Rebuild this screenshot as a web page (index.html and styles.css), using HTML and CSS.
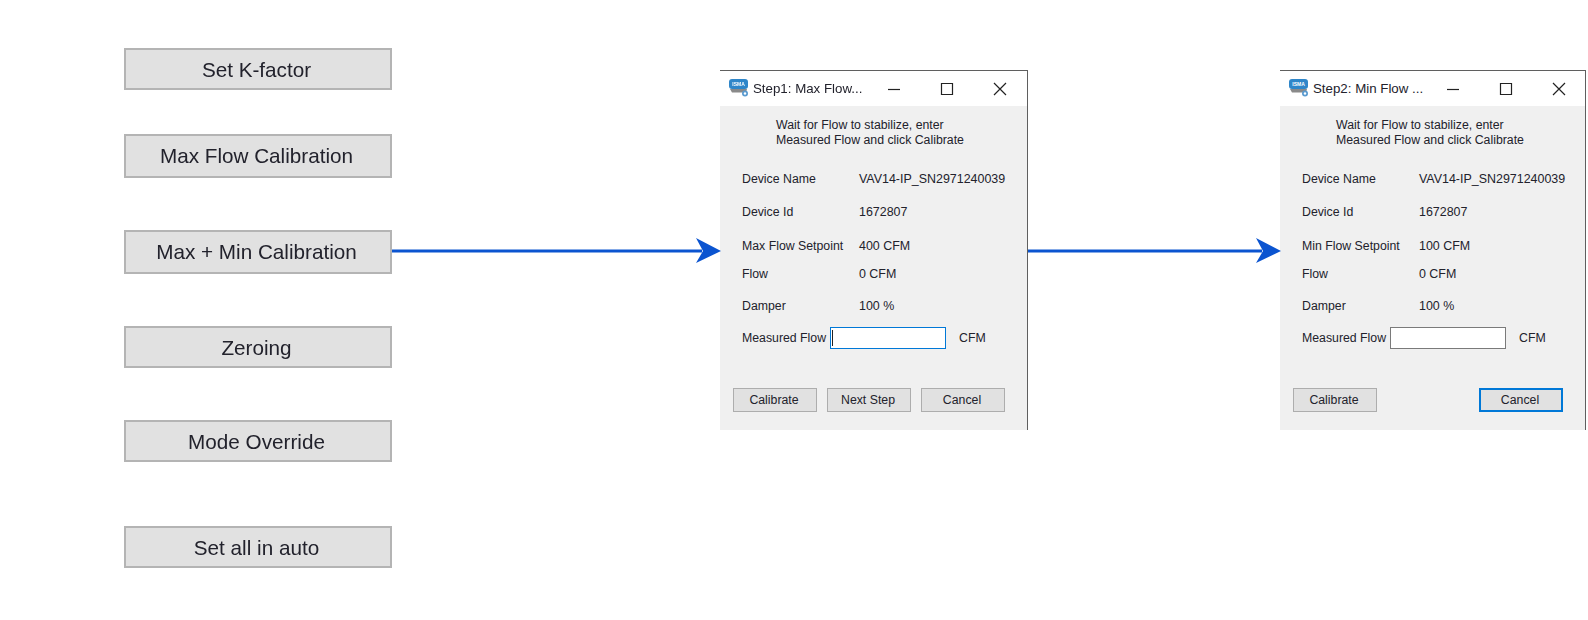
FILE: index.html
```html
<!DOCTYPE html>
<html lang="en">
<head>
<meta charset="utf-8">
<title>Calibration steps</title>
<link rel="stylesheet" href="styles.css">
</head>
<body>
<main class="canvas">
  <nav class="actions">
    <button class="action a1">Set K-factor</button>
    <button class="action a2">Max Flow Calibration</button>
    <button class="action a3">Max + Min Calibration</button>
    <button class="action a4">Zeroing</button>
    <button class="action a5">Mode Override</button>
    <button class="action a6">Set all in auto</button>
  </nav>

  <section class="dialog first">
    <header class="titlebar">
      <svg class="logo" width="22" height="20" viewBox="0 0 22 20"><rect x="1" y="1" width="19" height="10" rx="3" fill="#2f86c9"/><path d="M2 11h17l-1 3.500H4z" fill="#8a8a8a"/><text x="10.500" y="8.200" class="logo-text">ISMA</text><circle cx="17" cy="15.500" r="3" fill="#5b9bd0"/><circle cx="17" cy="15.500" r="1.200" fill="#fff"/></svg>
      <span class="title">Step1: Max Flow...</span>
      <span class="controls">
        <svg width="14" height="14" viewBox="0 0 14 14"><path d="M1 7.500h12" class="glyph"/></svg>
        <svg width="14" height="14" viewBox="0 0 14 14"><path d="M1.500 1.500h11v11h-11z" class="glyph"/></svg>
        <svg width="14" height="14" viewBox="0 0 14 14"><path d="M1 1l12 12M13 1L1 13" class="glyph"/></svg>
      </span>
    </header>
    <div class="content">
      <p class="hint">Wait for Flow to stabilize, enter<br>Measured Flow and click Calibrate</p>
      <div class="fields">
        <span>Device Name</span><span class="value">VAV14-IP_SN2971240039</span>
        <span>Device Id</span><span class="value">1672807</span>
        <span>Max Flow Setpoint</span><span class="value">400 CFM</span>
        <span>Flow</span><span class="value">0 CFM</span>
        <span>Damper</span><span class="value">100 %</span>
        <span>Measured Flow</span>
        <span class="entry"><span class="input focused"><i class="caret"></i></span><span>CFM</span></span>
      </div>
      <div class="buttons">
        <button class="win">Calibrate</button>
        <button class="win">Next Step</button>
        <button class="win">Cancel</button>
      </div>
    </div>
  </section>

  <section class="dialog second">
    <header class="titlebar">
      <svg class="logo" width="22" height="20" viewBox="0 0 22 20"><rect x="1" y="1" width="19" height="10" rx="3" fill="#2f86c9"/><path d="M2 11h17l-1 3.500H4z" fill="#8a8a8a"/><text x="10.500" y="8.200" class="logo-text">ISMA</text><circle cx="17" cy="15.500" r="3" fill="#5b9bd0"/><circle cx="17" cy="15.500" r="1.200" fill="#fff"/></svg>
      <span class="title">Step2: Min Flow ...</span>
      <span class="controls">
        <svg width="14" height="14" viewBox="0 0 14 14"><path d="M1 7.500h12" class="glyph"/></svg>
        <svg width="14" height="14" viewBox="0 0 14 14"><path d="M1.500 1.500h11v11h-11z" class="glyph"/></svg>
        <svg width="14" height="14" viewBox="0 0 14 14"><path d="M1 1l12 12M13 1L1 13" class="glyph"/></svg>
      </span>
    </header>
    <div class="content">
      <p class="hint">Wait for Flow to stabilize, enter<br>Measured Flow and click Calibrate</p>
      <div class="fields">
        <span>Device Name</span><span class="value">VAV14-IP_SN2971240039</span>
        <span>Device Id</span><span class="value">1672807</span>
        <span>Min Flow Setpoint</span><span class="value">100 CFM</span>
        <span>Flow</span><span class="value">0 CFM</span>
        <span>Damper</span><span class="value">100 %</span>
        <span>Measured Flow</span>
        <span class="entry"><span class="input"></span><span>CFM</span></span>
      </div>
      <div class="buttons spread">
        <button class="win">Calibrate</button>
        <button class="win default">Cancel</button>
      </div>
    </div>
  </section>

  <svg class="arrow arrow-one" width="330" height="26" viewBox="0 0 330 26"><path d="M0 11.500h310v3H0z" fill="#0b54d0"/><path d="M304 0l25 13-25 12 7-12z" fill="#0b54d0"/></svg>
  <svg class="arrow arrow-two" width="254" height="26" viewBox="0 0 254 26"><path d="M0 11.500h234v3H0z" fill="#0b54d0"/><path d="M228 0l25 13-25 12 7-12z" fill="#0b54d0"/></svg>
</main>
</body>
</html>
```

FILE: styles.css
```css
* { box-sizing: border-box; }
html, body { margin: 0; background: #fff; }
body { font-family: "Liberation Sans", Arial, sans-serif; color: #22222c; overflow: hidden; }

.canvas {
  position: relative;
  width: 1588px;
  height: 620px;
  display: flex;
  align-items: flex-start;
  padding-left: 124px;
  filter: blur(0.3px);
}

.actions {
  width: 268px;
  display: flex;
  flex-direction: column;
  padding-top: 48px;
  flex: none;
}
.action {
  height: 42px;
  padding: 1px 3px 0 0;
  font: 20.700px "Liberation Sans", Arial, sans-serif;
  color: #22222c;
  background: #e1e1e1;
  border: 2px solid #b4b4b4;
}
.a2 { margin-top: 44px; height: 44px; padding-top: 0; }
.a3 { margin-top: 52px; height: 44px; padding-top: 0; }
.a4 { margin-top: 52px; }
.a5 { margin-top: 52px; }
.a6 { margin-top: 64px; }

.dialog {
  flex: none;
  height: 360px;
  margin-top: 70px;
  background: #fff;
  border-top: 1px solid #5f5f5f;
  border-right: 1px solid #5f5f5f;
  display: flex;
  flex-direction: column;
}
.first { width: 308px; margin-left: 328px; }
.second { width: 306px; margin-left: 252px; }

.titlebar {
  height: 35px;
  flex: none;
  display: flex;
  align-items: center;
  padding-left: 8px;
  font-size: 13.300px;
}
.logo { flex: none; margin: 0 3px 2px 0; }
.logo-text { font: bold 5px "Liberation Sans", Arial, sans-serif; fill: #fff; text-anchor: middle; }
.title { width: 122px; flex: none; white-space: nowrap; }
.controls { display: flex; gap: 39px; margin-left: 12px; }
.second .controls { margin-left: 11px; }
.glyph { fill: none; stroke: #222; stroke-width: 1.200; }

.content {
  flex: 1;
  background: #f0f0f0;
  font-size: 12.300px;
  padding-top: 12px;
}
.hint { margin: 0 0 15px 56px; line-height: 15px; }

.fields {
  display: grid;
  grid-template-columns: 110px 1fr;
  grid-template-rows: 32px 34px 34px 22px 42px 22px;
  align-items: center;
  margin-left: 22px;
  white-space: nowrap;
}
.value { margin-left: 7px; font-size: 12.450px; }
.entry { margin-left: -22px; display: flex; align-items: center; gap: 13px; }
.input {
  width: 116px;
  height: 22px;
  background: #fff;
  border: 1px solid #7a7a7a;
  display: flex;
  align-items: center;
  padding-left: 1px;
}
.focused { border-color: #0078d7; }
.caret { width: 1px; height: 16px; background: #222; }

.buttons {
  display: flex;
  gap: 10px;
  margin: 39px 0 0 13px;
  width: 272px;
}
.spread { justify-content: space-between; width: 270px; }
.win {
  width: 84px;
  height: 24px;
  padding: 0 2px 0 0;
  font: 12.300px "Liberation Sans", Arial, sans-serif;
  color: #22222c;
  background: #e1e1e1;
  border: 1px solid #adadad;
}
.default { border: 2px solid #0078d7; }

.arrow { position: absolute; top: 238px; }
.arrow-one { left: 392px; }
.arrow-two { left: 1028px; }
```
